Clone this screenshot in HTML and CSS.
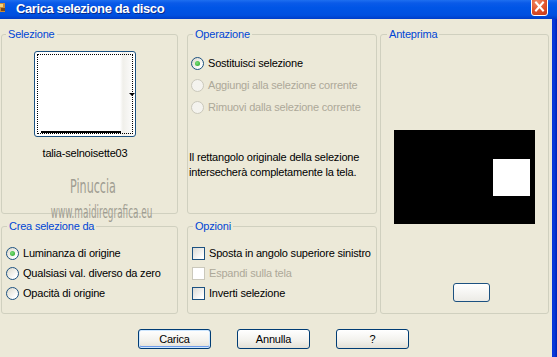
FILE: index.html
```html
<!DOCTYPE html>
<html>
<head>
<meta charset="utf-8">
<link rel="stylesheet" href="styles.css">
</head>
<body>
<div class="window">
  <div class="titlebar">
    <svg class="appicon" width="6" height="14" viewBox="0 0 6 14"><rect x="0" y="2" width="5" height="9" fill="#c98a3a"/><rect x="0" y="3" width="3" height="3" fill="#f2d27a"/><rect x="1" y="7" width="4" height="3" fill="#7a4a1a"/></svg>
    <span class="title">Carica selezione da disco</span>
    <div class="close"><svg width="15" height="15" viewBox="0 0 15 15"><path d="M4 3.5 L11 11.5 M11 3.5 L4 11.5" stroke="#fff" stroke-width="2" stroke-linecap="square"/></svg></div>
  </div>
  <div class="frame">
    <div class="client">
      <div class="groups">
        <fieldset class="group g-sel">
          <legend>Selezione</legend>
          <div class="sel-wrap">
            <div class="thumb"><div class="focus"></div><div class="thumb-line"></div><div class="arrow"></div></div>
            <div class="fname">talia-selnoisette03</div>
          </div>
        </fieldset>
        <fieldset class="group g-op">
          <legend>Operazione</legend>
          <div class="op-list">
            <div class="row"><span class="radio checked"></span><span>Sostituisci selezione</span></div>
            <div class="row disabled"><span class="radio"></span><span>Aggiungi alla selezione corrente</span></div>
            <div class="row disabled"><span class="radio"></span><span>Rimuovi dalla selezione corrente</span></div>
          </div>
          <p class="desc">Il rettangolo originale della selezione<br>intersecherà completamente la tela.</p>
        </fieldset>
        <fieldset class="group g-prev">
          <legend>Anteprima</legend>
          <div class="canvas"><div class="sq"></div></div>
          <div class="mini-btn"></div>
        </fieldset>
        <fieldset class="group g-crea">
          <legend>Crea selezione da</legend>
          <div class="list">
            <div class="row"><span class="radio checked"></span><span>Luminanza di origine</span></div>
            <div class="row"><span class="radio"></span><span>Qualsiasi val. diverso da zero</span></div>
            <div class="row"><span class="radio"></span><span>Opacità di origine</span></div>
          </div>
        </fieldset>
        <fieldset class="group g-opz">
          <legend>Opzioni</legend>
          <div class="list">
            <div class="row"><span class="check"></span><span>Sposta in angolo superiore sinistro</span></div>
            <div class="row disabled"><span class="check"></span><span>Espandi sulla tela</span></div>
            <div class="row"><span class="check"></span><span>Inverti selezione</span></div>
          </div>
        </fieldset>
      </div>
      <div class="buttons">
        <button class="btn default">Carica</button>
        <button class="btn">Annulla</button>
        <button class="btn">?</button>
      </div>
      <div class="watermark"><div class="wm1">Pinuccia</div><div class="wm2">www.maidiregrafica.eu</div></div>
    </div>
    <div class="rborder"></div>
  </div>
</div>
</body>
</html>
```
FILE: styles.css
```css
* { box-sizing: border-box; }
html, body { margin: 0; padding: 0; }
body { width: 557px; height: 357px; overflow: hidden; background: #ECE9D8; font-family: "Liberation Sans", Arial, sans-serif; font-size: 11px; letter-spacing: -0.2px; color: #000; }
.window { width: 557px; height: 357px; display: flex; flex-direction: column; }
.titlebar { height: 19px; flex: none; display: flex; align-items: center; background: linear-gradient(#1E6FF0 0, #0A5AE8 3px, #0055E6 40%, #0050E0 80%, #003DC8 100%); position: relative; }
.appicon { margin-left: 0; margin-top: -4px; }
.title { margin-left: 10px; color: #fff; font-family: "Liberation Sans", Arial, sans-serif; font-weight: bold; font-size: 13px; letter-spacing: -0.4px; margin-top: -3px; text-shadow: 1px 1px 0 #0a2a8a; }
.close { position: absolute; left: 531px; top: -6px; width: 17px; height: 22px; border: 1px solid #fff; border-radius: 3px; background: radial-gradient(circle at 35% 35%, #F08A66, #E0512A 55%, #C2381A); display: flex; align-items: flex-end; justify-content: center; padding-bottom: 1px; }
.frame { flex: 1; display: flex; }
.client { flex: 1; position: relative; padding: 9px 0 0 1px; }
.rborder { width: 5px; background: linear-gradient(90deg, #0831D9, #0A3CDB 40%, #0022B8); }
.groups { display: grid; grid-template-columns: 177px 9px 190px 3px 169px; grid-template-rows: 186px 6px 94px; }
.group { margin: 0; padding: 0; border: 1px solid #D0D0BF; border-radius: 3px; min-width: 0; }
.group legend { padding: 0 2px; margin-left: 5px; color: #0046D5; line-height: 13px; height: 13px; }
.g-sel { grid-column: 1; grid-row: 1; }
.g-op { grid-column: 3; grid-row: 1; }
.g-prev { grid-column: 5; grid-row: 1 / span 3; }
.g-crea { grid-column: 1; grid-row: 3; }
.g-opz { grid-column: 3; grid-row: 3; }
.g-sel legend { margin-left: 4px; }
.g-prev legend { margin-left: 6px; }
.sel-wrap { margin: 10px 0 0 32px; width: 102px; }
.thumb { width: 102px; height: 86px; border: 1px solid #1C5180; border-radius: 3px; background: linear-gradient(90deg, #fff 85%, #F0EFEA 88%, #fff 100%); position: relative; padding: 2px; }
.focus { width: 100%; height: 100%; border: 1px dotted #000; }
.thumb-line { position: absolute; left: 6px; bottom: 3px; width: 80px; height: 2px; background: #000; }
.arrow { position: absolute; left: 94px; top: 41px; width: 0; height: 0; border-left: 3px solid transparent; border-right: 3px solid transparent; border-top: 3px solid #000; }
.fname { text-align: center; margin-top: 10px; line-height: 13px; }
.op-list { padding-top: 11px; }
.row { display: flex; align-items: center; height: 22px; white-space: nowrap; }
.op-list .row { padding-left: 3px; }
.row.disabled { color: #ACA899; }
.radio { width: 13px; height: 13px; border-radius: 50%; border: 1px solid #1C5180; background: linear-gradient(135deg, #DCD9CB, #fff 80%); margin-right: 4px; flex: none; position: relative; }
.radio.checked::after { content: ""; position: absolute; left: 3px; top: 3px; width: 5px; height: 5px; border-radius: 50%; background: radial-gradient(circle at 40% 40%, #7CE07C, #21A121); }
.row.disabled .radio { border-color: #CAC8BB; background: #F4F3EE; }
.check { width: 13px; height: 13px; border: 1px solid #1C5180; background: linear-gradient(135deg, #DCDBD5, #fff 85%); margin-right: 4px; flex: none; }
.row.disabled .check { border-color: #CAC8BB; background: #fff; }
.desc { margin: 0; padding: 32px 0 0 1px; line-height: 15px; white-space: nowrap; }
.canvas { width: 141px; height: 94px; background: #000; margin: 89px auto 0; padding: 29px 0 0 99px; }
.sq { width: 37px; height: 37px; background: #fff; }
.mini-btn { width: 37px; height: 19px; margin: 59px 0 0 72px; border: 1px solid #1C5180; border-radius: 3px; background: linear-gradient(#fff, #ECEBE6); }
.list { padding-top: 10px; }
.list .row { height: 20px; padding-left: 4px; }
.buttons { display: flex; gap: 26px; margin: 15px 0 0 137px; }
.btn { width: 73px; height: 20px; border: 1px solid #003C74; border-radius: 3px; background: linear-gradient(#fff, #F2F1EC 60%, #E3E0D6); font-family: inherit; font-size: 11px; letter-spacing: -0.2px; color: #000; padding: 0; }
.btn.default { box-shadow: inset 0 0 0 1px #CEE7FF, inset 0 -1px 0 1px #6D9BEA; }
.watermark { position: absolute; left: 20px; top: 156px; width: 146px; text-align: center; color: #9F9D92; font-family: "DejaVu Sans Condensed", "DejaVu Sans", sans-serif; letter-spacing: 0; pointer-events: none; }
.wm1 { font-size: 20px; line-height: 22px; transform: scaleX(0.62); }
.wm2 { font-size: 17px; line-height: 18px; margin-top: 6px; transform: scaleX(0.58); white-space: nowrap; }
```
